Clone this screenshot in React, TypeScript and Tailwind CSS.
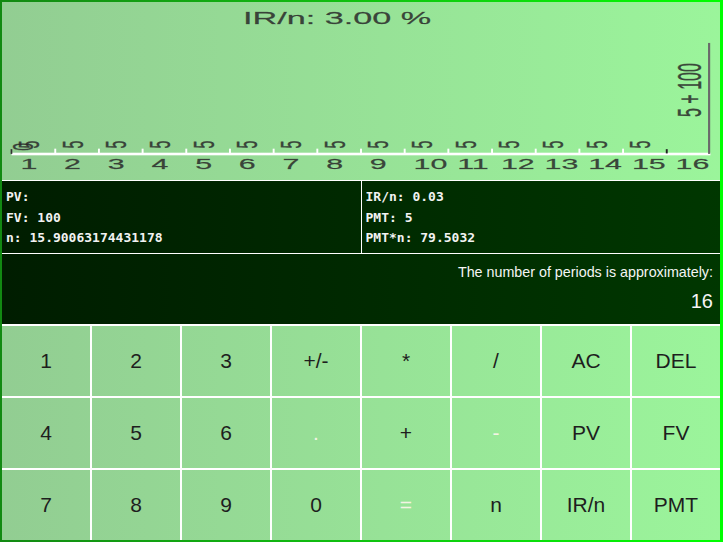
const keys = [
  "1", "2", "3", "+/-", "*", "/", "AC", "DEL",
  "4", "5", "6", ".", "+", "-", "PV", "FV",
  "7", "8", "9", "0", "=", "n", "IR/n", "PMT",
];

// thin glyphs come out pale in the original rendering
const pale = new Set([".", "-", "="]);

const sans = "'Liberation Sans', Arial, sans-serif";
const green = "bg-linear-to-r from-[#92cd92] to-[#9bf59b] bg-fixed";
const dark = "bg-linear-to-r from-[#001d00] to-[#003700] bg-fixed";

const ink = { fill: "#2a2a2a", fillOpacity: 0.85, stroke: "#2a2a2a", strokeOpacity: 0.6, strokeWidth: 0.25 };

// canvas is 300x150 stretched to the panel, so the svg does the same
function Chart() {
  const cols = Array.from({ length: 16 }, (_, i) => i);
  return (
    <svg
      viewBox="0 0 300 150"
      preserveAspectRatio="none"
      className="block h-[178px] w-full"
      fontFamily={sans}
    >
      <text x={100.7} y={18.5} fontSize={14.3} {...ink}>
        IR/n: 3.00 %
      </text>

      <rect x={4} y={127} width={292} height={2.2} fill="#fff" />
      <rect x={3.6} y={124} width={0.7} height={4} fill="#333" />

      {cols.slice(0, 14).map((i) => (
        <rect
          key={"t" + i}
          x={4 + 18.25 * (i + 1) - 0.4}
          y={123.6}
          width={0.8}
          height={4}
          fill="#fff"
        />
      ))}
      <rect x={4 + 18.25 * 15 - 0.4} y={124} width={0.8} height={3.6} fill="#222" />

      <rect x={295} y={34.5} width={0.9} height={93.5} fill="#6a6a6a" />

      <text transform="translate(13 125.3) rotate(-90)" fontSize={12} {...ink}>
        0
      </text>
      {cols.slice(0, 15).map((i) => (
        <text
          key={"v" + i}
          transform={`translate(${15.4 + 18.25 * i} 123.4) rotate(-90)`}
          fontSize={12}
          {...ink}
        >
          5
        </text>
      ))}
      <text transform="translate(292 96.9) rotate(-90)" fontSize={13.5} {...ink}>
        5 + 100
      </text>

      {cols.map((i) => (
        <text key={"l" + i} x={7.7 + 18.25 * i} y={141} fontSize={12.7} {...ink}>
          {i + 1}
        </text>
      ))}
    </svg>
  );
}

export default function App() {
  return (
    <div className="h-[542px] w-[723px] bg-linear-to-r from-[#128912] to-[#00ff00] pt-[2px] pb-[2px] pl-[2px] pr-[3px]">
      <div className="flex h-full flex-col gap-px bg-white">
        <div className={`h-[178px] ${green}`}>
          <Chart />
        </div>

        <div
          className="grid h-[72px] grid-cols-2 gap-px bg-white text-[13px] font-bold leading-[20.5px] text-[#f2f2f2]"
          style={{ fontFamily: "'DejaVu Sans Mono', 'Liberation Mono', monospace" }}
        >
          <div className={`${dark} pl-[4px] pt-[6px]`}>
            <div>PV:</div>
            <div>FV: 100</div>
            <div>n: 15.90063174431178</div>
          </div>
          <div className={`${dark} pl-[4px] pt-[6px]`}>
            <div>IR/n: 0.03</div>
            <div>PMT: 5</div>
            <div>PMT*n: 79.5032</div>
          </div>
        </div>

        <div
          className={`${dark} flex h-[70px] flex-col items-end pr-[7px] pt-[10px] text-[#f5f5f5]`}
          style={{ fontFamily: sans }}
        >
          <div className="text-[14.3px] leading-[16px]">The number of periods is approximately:</div>
          <div className="mt-[9px] text-[20px] leading-[24px]">16</div>
        </div>

        <div
          className="mt-px grid flex-1 grid-cols-8 grid-rows-3 gap-[2px] bg-white"
          style={{ fontFamily: sans }}
        >
          {keys.map((k) => (
            <button
              key={k}
              className={`${green} flex items-center justify-center text-[21px] ${
                pale.has(k) ? "text-[#f4f4e4]" : "text-[#1e1e1e]"
              }`}
            >
              {k}
            </button>
          ))}
        </div>
      </div>
    </div>
  );
}
